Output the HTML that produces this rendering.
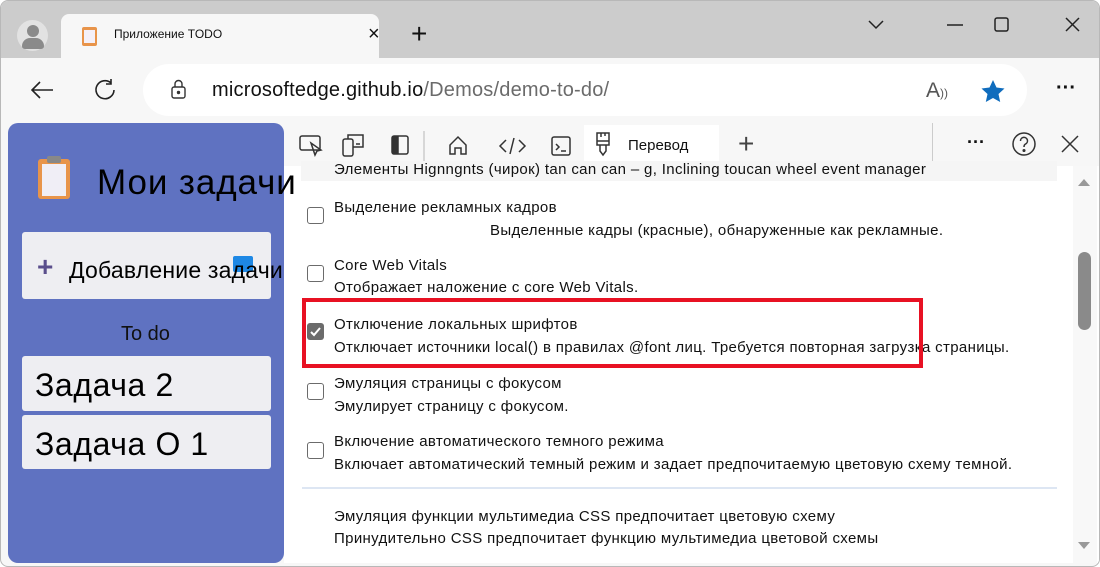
<!DOCTYPE html>
<html><head><meta charset="utf-8"><style>
*{margin:0;padding:0;box-sizing:border-box}
body{width:1100px;height:567px;overflow:hidden;background:#fff;font-family:"Liberation Sans","Noto Sans CJK SC",sans-serif;position:relative}
.a{position:absolute}
.t{font-size:15px;color:#111;white-space:nowrap;position:absolute;letter-spacing:0.35px}
.cb{position:absolute;left:306px;width:17px;height:17px;border:1.5px solid #6b6b6b;border-radius:3px;background:#fff}
</style></head><body>
<div class="a" style="left:0;top:0;width:1100px;height:567px;border:1px solid #b8b8b8;border-radius:8px;background:#f7f7f7;overflow:hidden">
<div class="a" style="left:0;top:0;width:1100px;height:57px;background:#cccccc"></div>
<div class="a" style="left:16px;top:19px;width:31px;height:31px;border-radius:50%;background:#e2e2e2"></div>
<div class="a" style="left:26px;top:24px;width:12px;height:12px;border-radius:50%;background:#8a8a8a"></div>
<div class="a" style="left:21px;top:37px;width:22px;height:11px;border-radius:11px 11px 4px 4px;background:#8a8a8a"></div>
<div class="a" style="left:60px;top:13px;width:318px;height:45px;background:#f7f7f7;border-radius:8px 8px 0 0"></div>
<div class="a" style="left:81px;top:26px;width:15px;height:19px;background:#e8944a;border-radius:2px"></div>
<div class="a" style="left:83px;top:29px;width:11px;height:13px;background:#f4f0f8"></div>
<div class="t" style="left:113px;top:26px;font-size:12px;letter-spacing:0">Приложение TODO</div>
<div class="t" style="left:367px;top:22px;font-size:20px;letter-spacing:0">×</div>
<div class="t" style="left:410px;top:17px;font-size:28px;font-weight:300;letter-spacing:0">+</div>
<svg class="a" style="left:860px;top:12px" width="230" height="24" fill="none" stroke="#222" stroke-width="1.5"><path d="M8 8l7 7 7-7"/><path d="M86 12h16"/><rect x="134" y="5" width="13" height="13" rx="2"/><path d="M205 5l13 13M218 5l-13 13"/></svg>
<svg class="a" style="left:28px;top:76px" width="100" height="28" fill="none" stroke="#222" stroke-width="1.6"><path d="M24 13H3M11 5l-8 8 8 8"/><path d="M82 6a9 9 0 1 0 3 7M82 2v5h-5"/></svg>
<div class="a" style="left:142px;top:63px;width:884px;height:52px;background:#fff;border-radius:26px"></div>
<svg class="a" style="left:168px;top:78px" width="20" height="22" fill="none" stroke="#333" stroke-width="1.4"><rect x="3" y="8" width="13" height="11" rx="2"/><path d="M6 8V5a3.5 3.5 0 0 1 7 0v3"/><circle cx="9.5" cy="13.5" r="1" fill="#333"/></svg>
<div class="t" style="left:211px;top:78px;font-size:20px;color:#111;letter-spacing:0.2px">microsoftedge.github.io<span style="color:#6b6b6b">/Demos/demo-to-do/</span></div>
<div class="t" style="left:925px;top:78px;font-size:21px;color:#555;letter-spacing:0">A<span style="font-size:12px">))</span></div>
<svg class="a" style="left:979px;top:78px" width="26" height="24"><path d="M13 1l3.5 7.5 8 1-6 5.5 1.7 8L13 19l-7.2 4 1.7-8-6-5.5 8-1z" fill="#0f6cbd"/></svg>
<div class="t" style="left:1055px;top:76px;font-size:20px;font-weight:bold;letter-spacing:0">···</div>
<!-- left app -->
<div class="a" style="left:7px;top:122px;width:276px;height:440px;background:#5f72c1;border-radius:10px"></div>
<div class="a" style="left:37px;top:158px;width:32px;height:40px;background:#e8944a;border-radius:3px"></div>
<div class="a" style="left:41px;top:163px;width:24px;height:32px;background:#f0eef6"></div>
<div class="a" style="left:46px;top:155px;width:14px;height:7px;background:#888;border-radius:2px"></div>
<div class="a" style="left:21px;top:231px;width:249px;height:67px;background:#eeeef2;border-radius:3px"></div>
<div class="t" style="left:36px;top:250px;font-size:28px;color:#5a4e8c;font-weight:bold;letter-spacing:0">+</div>
<div class="a" style="left:232px;top:255px;width:20px;height:16px;background:#1e88e5;border-radius:2px"></div>
<div class="t" style="left:68px;top:256px;font-size:23px;color:#000;letter-spacing:0.2px">Добавление задачи</div>
<div class="t" style="left:120px;top:322px;font-size:20px;color:#111;letter-spacing:0">To do</div>
<div class="a" style="left:21px;top:355px;width:249px;height:55px;background:#eeeef2;border-radius:3px"></div>
<div class="t" style="left:34px;top:366px;font-size:32px;color:#000;letter-spacing:0.6px">Задача 2</div>
<div class="a" style="left:21px;top:414px;width:249px;height:54px;background:#eeeef2;border-radius:3px"></div>
<div class="t" style="left:34px;top:425px;font-size:32px;color:#000;letter-spacing:0.6px">Задача О 1</div>
<!-- devtools -->
<div class="a" style="left:283px;top:122px;width:815px;height:440px;background:#fff"></div>
<div class="a" style="left:283px;top:122px;width:815px;height:43px;background:#f7f7f7"></div>
<svg class="a" style="left:295px;top:130px" width="480" height="30" fill="none" stroke="#333" stroke-width="1.5"><rect x="4" y="5" width="20" height="14" rx="2"/><path d="M15 12l4 12 2-4 4-1z"/><rect x="47" y="8" width="10" height="17" rx="2"/><path d="M52 8V4h15v12H57M60 13h4"/><rect x="96" y="5" width="16" height="18" rx="2"/><rect x="97" y="6" width="5" height="16" fill="#333"/><path d="M128 0v30" stroke="#ccc"/><path d="M154 23v-9l8-8 8 8v9h-5v-6h-6v6z"/><path d="M210 9l-6 6 6 6M223 9l6 6-6 6M218 7l-4 16"/><rect x="256" y="6" width="18" height="18" rx="2"/><path d="M260 13l3 3-3 3M265 20h5"/></svg>
<div class="a" style="left:583px;top:124px;width:135px;height:37px;background:#fff"></div>
<svg class="a" style="left:592px;top:130px" width="22" height="28" fill="none" stroke="#333" stroke-width="1.5"><path d="M4 2h12v12H4zM4 10h12M8 2v4M12 2v3M7 14v6l3 4 3-4v-6"/></svg>
<div class="t" style="left:627px;top:136px;font-size:15px;letter-spacing:0">Перевод</div>
<div class="t" style="left:737px;top:127px;font-size:28px;font-weight:200;color:#444;letter-spacing:0">+</div>
<div class="a" style="left:931px;top:122px;width:1px;height:38px;background:#ccc"></div>
<div class="t" style="left:966px;top:131px;font-size:18px;font-weight:bold;letter-spacing:0">···</div>
<svg class="a" style="left:1010px;top:130px" width="80" height="28" fill="none" stroke="#333" stroke-width="1.5"><circle cx="13" cy="13" r="11"/><path d="M9.5 10a3.5 3.5 0 1 1 5 3c-1.3.7-1.5 1.5-1.5 3"/><circle cx="13" cy="19.5" r=".8" fill="#333"/><path d="M51 5l16 16M67 5l-16 16"/></svg>
<div class="a" style="left:300px;top:160px;width:756px;height:20px;background:#f5f5f5"></div>
<div class="t" style="left:333px;top:160px">Элементы Hignngnts (чирок) tan can can – g, Inclining toucan wheel event manager</div>
<div class="t" style="left:96px;top:162px;font-size:35px;color:#000;letter-spacing:0.9px">Мои задачи</div>
<div class="cb" style="top:206px"></div>
<div class="t" style="left:333px;top:198px">Выделение рекламных кадров</div>
<div class="t" style="left:489px;top:221px">Выделенные кадры (красные), обнаруженные как рекламные.</div>
<div class="cb" style="top:264px"></div>
<div class="t" style="left:333px;top:256px">Core Web Vitals</div>
<div class="t" style="left:333px;top:278px">Отображает наложение с core Web Vitals.</div>
<div class="a" style="left:306px;top:322px;width:17px;height:17px;border-radius:3px;background:#6b6b6b"></div>
<svg class="a" style="left:306px;top:322px" width="17" height="17" fill="none" stroke="#fff" stroke-width="2"><path d="M4 9l3 3 6-7"/></svg>
<div class="t" style="left:333px;top:315px">Отключение локальных шрифтов</div>
<div class="t" style="left:333px;top:338px">Отключает источники local() в правилах @font лиц. Требуется повторная загрузка страницы.</div>
<div class="a" style="left:301px;top:297px;width:621px;height:70px;border:4px solid #e81123"></div>
<div class="cb" style="top:382px"></div>
<div class="t" style="left:333px;top:374px">Эмуляция страницы с фокусом</div>
<div class="t" style="left:333px;top:397px">Эмулирует страницу с фокусом.</div>
<div class="cb" style="top:441px"></div>
<div class="t" style="left:333px;top:432px">Включение автоматического темного режима</div>
<div class="t" style="left:333px;top:455px">Включает автоматический темный режим и задает предпочитаемую цветовую схему темной.</div>
<div class="a" style="left:301px;top:486px;width:755px;height:2px;background:#dde6f3"></div>
<div class="t" style="left:333px;top:507px">Эмуляция функции мультимедиа CSS предпочитает цветовую схему</div>
<div class="t" style="left:333px;top:529px">Принудительно CSS предпочитает функцию мультимедиа цветовой схемы</div>
<div class="a" style="left:1072px;top:165px;width:24px;height:397px;background:#f8f8f8"></div>
<svg class="a" style="left:1075px;top:175px" width="16" height="380" fill="#999"><path d="M2 10l6-7 6 7z"/><path d="M2 366l6 7 6-7z"/></svg>
<div class="a" style="left:1077px;top:251px;width:13px;height:78px;background:#8a8a8a;border-radius:7px"></div>
</div>
</body></html>
